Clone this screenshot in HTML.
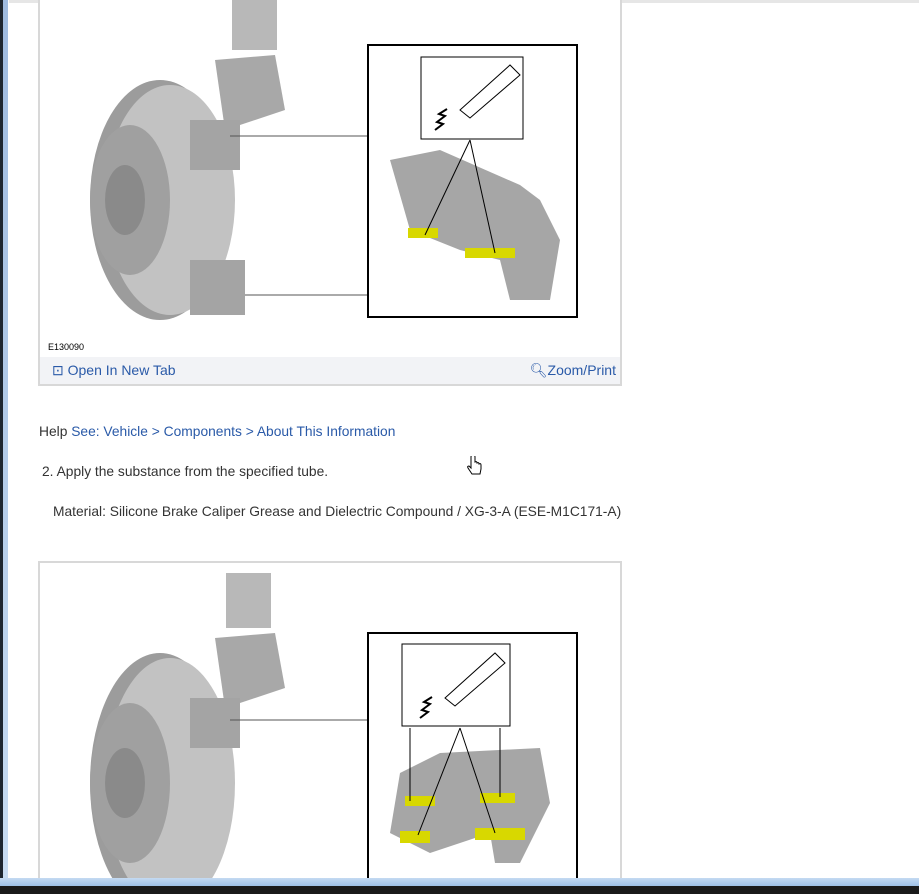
<!DOCTYPE html>
<html><head><style>
body{margin:0;width:919px;height:894px;overflow:hidden;background:#fff;font-family:"Liberation Sans",sans-serif;position:relative}
.lf{position:absolute;left:0;top:0;width:3px;height:894px;background:#1e2630}
.lb{position:absolute;left:3px;top:0;width:5px;height:880px;background:linear-gradient(#9fbbe0,#c8dcf2)}
.ts{position:absolute;left:9px;top:0;width:910px;height:3px;background:#e6e6e6}
.box{position:absolute;left:38px;width:580px;border:2px solid #d8d8d8;background:#fff}
.bar{position:absolute;left:0;right:0;bottom:0;height:27px;background:#f2f3f6;font-size:14px;color:#2a5aa8}
.t{position:absolute;font-size:13.8px;color:#333}
a{color:#2a5aa8;text-decoration:none}
.bb{position:absolute;left:0;top:878px;width:919px;height:8px;background:linear-gradient(#c4daf2,#9ec0e6)}
.bk{position:absolute;left:0;top:886px;width:919px;height:8px;background:#1a1a1a}
</style></head><body>
<div class="lf"></div><div class="lb"></div><div class="ts"></div>

<div class="box" style="top:-2px;height:384px">
<svg width="580" height="360" style="position:absolute;left:0;top:0">
<rect x="192" y="0" width="45" height="50" fill="#b8b8b8"/>
<path d="M175 60 L235 55 L245 110 L185 130Z" fill="#a8a8a8"/>
<ellipse cx="120" cy="200" rx="70" ry="120" fill="#9c9c9c"/>
<ellipse cx="130" cy="200" rx="65" ry="115" fill="#c2c2c2"/>
<ellipse cx="90" cy="200" rx="40" ry="75" fill="#a0a0a0"/>
<ellipse cx="85" cy="200" rx="20" ry="35" fill="#8a8a8a"/>
<rect x="150" y="120" width="50" height="50" fill="#a4a4a4"/>
<rect x="150" y="260" width="55" height="55" fill="#a4a4a4"/>
<line x1="190" y1="136" x2="328" y2="136" stroke="#555"/>
<line x1="205" y1="295" x2="328" y2="295" stroke="#555"/>
<rect x="328" y="45" width="209" height="272" fill="#fff" stroke="#000" stroke-width="2"/>
<rect x="381" y="57" width="102" height="82" fill="#fff" stroke="#000"/>
<path d="M420 110 L470 65 L480 75 L430 118Z" fill="#fff" stroke="#000"/>
<path d="M395 130 l8-6 l-6-2 l8-6 l-6-2 l8-5" fill="none" stroke="#000" stroke-width="2"/>
<path d="M350 160 L400 150 L480 185 L500 200 L520 240 L510 300 L470 300 L460 260 L420 250 L370 230Z" fill="#a6a6a6"/>
<rect x="368" y="228" width="30" height="10" fill="#d8d800"/>
<rect x="425" y="248" width="50" height="10" fill="#d8d800"/>
<line x1="430" y1="140" x2="385" y2="235" stroke="#000"/><line x1="430" y1="140" x2="455" y2="253" stroke="#000"/>
<text x="8" y="350" font-size="9" font-family="Liberation Sans">E130090</text>
</svg>
<div class="bar"><span style="position:absolute;left:12px;top:5px">⊡ Open In New Tab</span><span style="position:absolute;right:4px;top:5px">🔍︎Zoom/Print</span></div>
</div>

<div class="t" style="left:39px;top:424px">Help <a>See: Vehicle &gt; Components &gt; About This Information</a></div>
<div class="t" style="left:42px;top:464px">2. Apply the substance from the specified tube.</div>
<div class="t" style="left:53px;top:504px">Material: Silicone Brake Caliper Grease and Dielectric Compound / XG-3-A (ESE-M1C171-A)</div>
<svg style="position:absolute;left:466px;top:456px" width="16" height="22"><path d="M5 1 v11 l-2-2 q-2 0-1 2 l4 6 h8 l1-5 v-4 q0-2-2-1 q0-2-2-1 q0-2-2-1 v-5 q0-2-2-2 q-2 0-2 2z" fill="#fff" stroke="#000"/></svg>

<div class="box" style="top:561px;height:330px;border-bottom:none">
<svg width="580" height="330" style="position:absolute;left:0;top:0">
<rect x="186" y="10" width="45" height="55" fill="#b8b8b8"/>
<path d="M175 75 L235 70 L245 125 L185 145Z" fill="#a8a8a8"/>
<ellipse cx="120" cy="220" rx="70" ry="130" fill="#9c9c9c"/>
<ellipse cx="130" cy="220" rx="65" ry="125" fill="#c2c2c2"/>
<ellipse cx="90" cy="220" rx="40" ry="80" fill="#a0a0a0"/>
<ellipse cx="85" cy="220" rx="20" ry="35" fill="#8a8a8a"/>
<rect x="150" y="135" width="50" height="50" fill="#a4a4a4"/>
<line x1="190" y1="157" x2="328" y2="157" stroke="#555"/>
<rect x="328" y="70" width="209" height="260" fill="#fff" stroke="#000" stroke-width="2"/>
<rect x="362" y="81" width="108" height="82" fill="#fff" stroke="#000"/>
<path d="M405 135 L455 90 L465 100 L415 143Z" fill="#fff" stroke="#000"/>
<path d="M380 155 l8-6 l-6-2 l8-6 l-6-2 l8-5" fill="none" stroke="#000" stroke-width="2"/>
<path d="M360 210 L400 190 L500 185 L510 240 L480 300 L455 300 L450 270 L390 290 L350 270Z" fill="#a6a6a6"/>
<rect x="365" y="233" width="30" height="10" fill="#d8d800"/>
<rect x="440" y="230" width="35" height="10" fill="#d8d800"/>
<rect x="360" y="268" width="30" height="12" fill="#d8d800"/>
<rect x="435" y="265" width="50" height="12" fill="#d8d800"/>
<line x1="420" y1="165" x2="378" y2="272" stroke="#000"/><line x1="420" y1="165" x2="455" y2="270" stroke="#000"/>
<line x1="370" y1="165" x2="370" y2="238" stroke="#000"/><line x1="460" y1="165" x2="460" y2="234" stroke="#000"/>
</svg>
</div>

<div class="bb"></div><div class="bk"></div>
</body></html>
